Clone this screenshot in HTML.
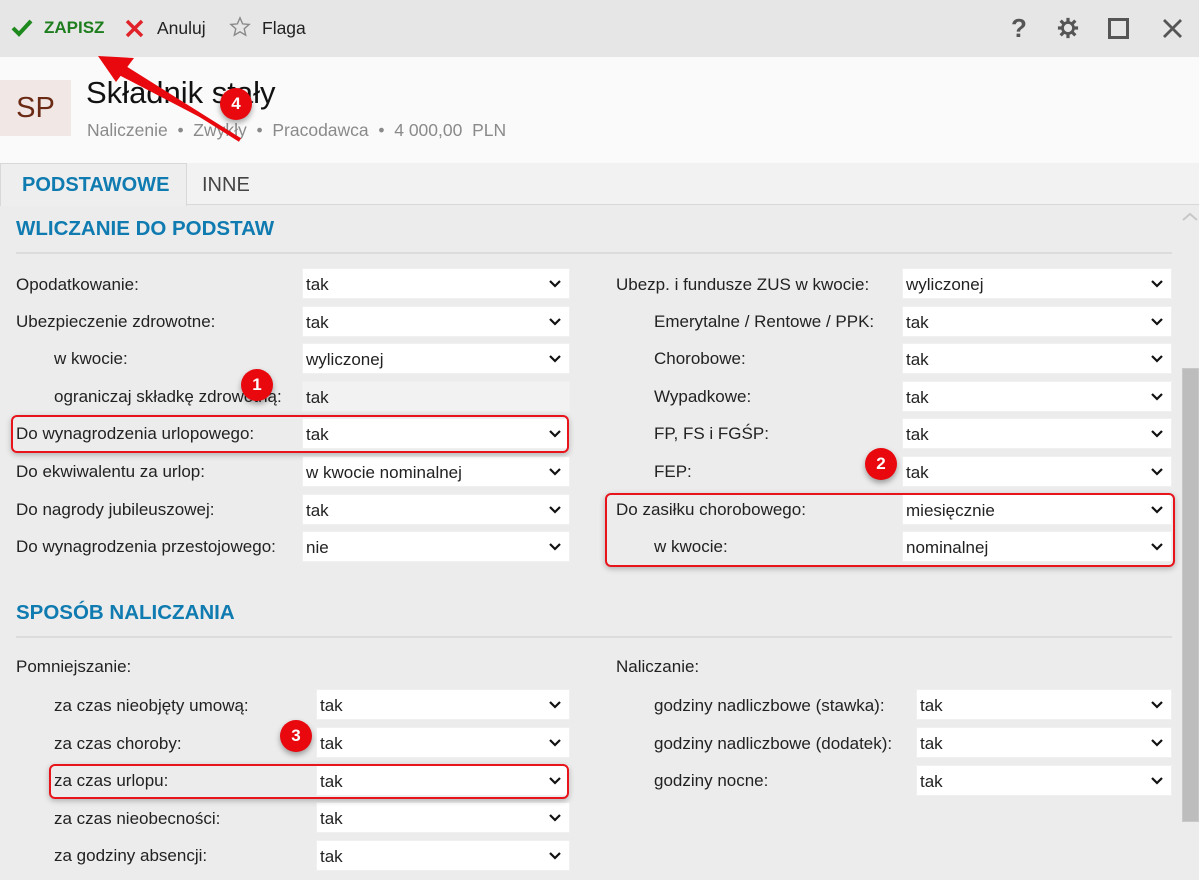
<!DOCTYPE html>
<html><head><meta charset="utf-8"><style>
*{margin:0;padding:0;box-sizing:border-box}
body{width:1199px;height:880px;overflow:hidden;background:#ececec;font-family:"Liberation Sans",sans-serif;font-size:17px;color:#222;position:relative}
.a{position:absolute;white-space:nowrap}
.tb{left:0;top:0;width:1199px;height:57px;background:#e6e6e6}
.hd{left:0;top:57px;width:1199px;height:106px;background:#fafafa}
.tabs{left:0;top:163px;width:1199px;height:42px;background:#f2f2f2;border-bottom:1px solid #d8d8d8}
.lbl{line-height:20px}
.sel{position:absolute;height:31px;background:#fff;border:1px solid #f0f0f0;line-height:31px;padding-left:3px}
.sel svg{position:absolute;right:8px;top:11px}
.ro{background:#f2f2f2}
.h{color:#0f7bb0;font-weight:bold;font-size:20.5px}
.line{height:2px;background:#dcdcdc}
.red{position:absolute;border:2px solid #e8141c;border-radius:6px;box-shadow:0 2px 6px rgba(0,0,0,.25)}
.c{position:absolute;width:32px;height:32px;border-radius:50%;background:#e8080e;color:#fff;font-weight:bold;font-size:17px;text-align:center;line-height:32px;box-shadow:0 3px 6px rgba(0,0,0,.35)}
</style></head><body>
<div class="a tb"></div>
<svg class="a" style="left:11px;top:19px" width="22" height="18" viewBox="0 0 22 18"><path d="M2 9 L8 15 L20 2" stroke="#1e8a1e" stroke-width="4" fill="none"/></svg>
<div class="a" style="left:44px;top:18px;color:#1e7d1e;font-weight:bold;font-size:17px">ZAPISZ</div>
<svg class="a" style="left:125px;top:19px" width="19" height="19"><path d="M2 2L17 17M17 2L2 17" stroke="#e0232a" stroke-width="3.5"/></svg>
<div class="a" style="left:157px;top:18px;font-size:17.5px">Anuluj</div>
<svg class="a" style="left:229px;top:16px" width="22" height="22" viewBox="0 0 24 24"><path d="M12 2l2.9 6.6 7.1.6-5.4 4.7 1.6 7-6.2-3.7-6.2 3.7 1.6-7L2 9.2l7.1-.6z" fill="none" stroke="#888" stroke-width="1.5"/></svg>
<div class="a" style="left:262px;top:18px;font-size:17.5px">Flaga</div>
<div class="a" style="left:1011px;top:13px;font-size:26px;color:#555;font-weight:bold">?</div>
<svg class="a" style="left:1057px;top:17px" width="22" height="22" viewBox="0 0 24 24"><circle cx="12" cy="12" r="6" fill="none" stroke="#555" stroke-width="3"/><g stroke="#555" stroke-width="3.5"><path d="M12 1v5M12 18v5M1 12h5M18 12h5M4 4l3.5 3.5M16.5 16.5L20 20M20 4l-3.5 3.5M7.5 16.5L4 20"/></g></svg>
<div class="a" style="left:1108px;top:18px;width:21px;height:21px;border:3px solid #555"></div>
<svg class="a" style="left:1162px;top:18px" width="21" height="21"><path d="M2 2L19 19M19 2L2 19" stroke="#555" stroke-width="2.8"/></svg>

<div class="a hd"></div>
<div class="a" style="left:0;top:80px;width:71px;height:56px;background:#f1e7e5;color:#6b2a14;font-size:29px;line-height:56px;text-align:center">SP</div>
<div class="a" style="left:86px;top:75px;font-size:31px;color:#111">Składnik stały</div>
<div class="a" style="left:87px;top:120px;font-size:17.5px;color:#8a8a8a">Naliczenie &nbsp;•&nbsp; Zwykły &nbsp;•&nbsp; Pracodawca &nbsp;•&nbsp; 4 000,00 &nbsp;PLN</div>

<div class="a tabs"></div>
<div class="a" style="left:0;top:163px;width:187px;height:43px;background:#eeeeee;border:1px solid #d8d8d8;border-bottom:none"></div>
<div class="a" style="left:22px;top:174px;font-size:20px;font-weight:bold;color:#0f7bb0">PODSTAWOWE</div>
<div class="a" style="left:202px;top:174px;font-size:20px;color:#444">INNE</div>

<svg class="a" style="left:1182px;top:212px" width="16" height="10"><path d="M1 8L8 2L15 8" stroke="#c8c8c8" stroke-width="2" fill="none"/></svg>
<div class="a" style="left:1182px;top:368px;width:17px;height:454px;background:#bdbdbd;border:1px solid #c8c8c8"></div>

<div class="a h" style="left:16px;top:217px">WLICZANIE DO PODSTAW</div>
<div class="a line" style="left:16px;top:252px;width:1156px"></div>

<div class="a lbl" style="left:16px;top:275px">Opodatkowanie:</div>
<div class="a lbl" style="left:16px;top:312px">Ubezpieczenie zdrowotne:</div>
<div class="a lbl" style="left:54px;top:349px">w kwocie:</div>
<div class="a lbl" style="left:54px;top:387px">ograniczaj składkę zdrowotną:</div>
<div class="a lbl" style="left:16px;top:424px">Do wynagrodzenia urlopowego:</div>
<div class="a lbl" style="left:16px;top:462px">Do ekwiwalentu za urlop:</div>
<div class="a lbl" style="left:16px;top:500px">Do nagrody jubileuszowej:</div>
<div class="a lbl" style="left:16px;top:537px">Do wynagrodzenia przestojowego:</div>

<div class="sel" style="left:302px;top:268px;width:268px">tak<svg width="12" height="8"><path d="M1 1l5 5 5-5" stroke="#111" stroke-width="2.2" fill="none"/></svg></div>
<div class="sel" style="left:302px;top:306px;width:268px">tak<svg width="12" height="8"><path d="M1 1l5 5 5-5" stroke="#111" stroke-width="2.2" fill="none"/></svg></div>
<div class="sel" style="left:302px;top:343px;width:268px">wyliczonej<svg width="12" height="8"><path d="M1 1l5 5 5-5" stroke="#111" stroke-width="2.2" fill="none"/></svg></div>
<div class="sel ro" style="left:302px;top:381px;width:268px">tak</div>
<div class="sel" style="left:302px;top:418px;width:268px">tak<svg width="12" height="8"><path d="M1 1l5 5 5-5" stroke="#111" stroke-width="2.2" fill="none"/></svg></div>
<div class="sel" style="left:302px;top:456px;width:268px">w kwocie nominalnej<svg width="12" height="8"><path d="M1 1l5 5 5-5" stroke="#111" stroke-width="2.2" fill="none"/></svg></div>
<div class="sel" style="left:302px;top:494px;width:268px">tak<svg width="12" height="8"><path d="M1 1l5 5 5-5" stroke="#111" stroke-width="2.2" fill="none"/></svg></div>
<div class="sel" style="left:302px;top:531px;width:268px">nie<svg width="12" height="8"><path d="M1 1l5 5 5-5" stroke="#111" stroke-width="2.2" fill="none"/></svg></div>

<div class="a lbl" style="left:616px;top:275px">Ubezp. i fundusze ZUS w kwocie:</div>
<div class="a lbl" style="left:654px;top:312px">Emerytalne / Rentowe / PPK:</div>
<div class="a lbl" style="left:654px;top:349px">Chorobowe:</div>
<div class="a lbl" style="left:654px;top:387px">Wypadkowe:</div>
<div class="a lbl" style="left:654px;top:424px">FP, FS i FGŚP:</div>
<div class="a lbl" style="left:654px;top:462px">FEP:</div>
<div class="a lbl" style="left:616px;top:500px">Do zasiłku chorobowego:</div>
<div class="a lbl" style="left:654px;top:537px">w kwocie:</div>

<div class="sel" style="left:902px;top:268px;width:270px">wyliczonej<svg width="12" height="8"><path d="M1 1l5 5 5-5" stroke="#111" stroke-width="2.2" fill="none"/></svg></div>
<div class="sel" style="left:902px;top:306px;width:270px">tak<svg width="12" height="8"><path d="M1 1l5 5 5-5" stroke="#111" stroke-width="2.2" fill="none"/></svg></div>
<div class="sel" style="left:902px;top:343px;width:270px">tak<svg width="12" height="8"><path d="M1 1l5 5 5-5" stroke="#111" stroke-width="2.2" fill="none"/></svg></div>
<div class="sel" style="left:902px;top:381px;width:270px">tak<svg width="12" height="8"><path d="M1 1l5 5 5-5" stroke="#111" stroke-width="2.2" fill="none"/></svg></div>
<div class="sel" style="left:902px;top:418px;width:270px">tak<svg width="12" height="8"><path d="M1 1l5 5 5-5" stroke="#111" stroke-width="2.2" fill="none"/></svg></div>
<div class="sel" style="left:902px;top:456px;width:270px">tak<svg width="12" height="8"><path d="M1 1l5 5 5-5" stroke="#111" stroke-width="2.2" fill="none"/></svg></div>
<div class="sel" style="left:902px;top:494px;width:270px">miesięcznie<svg width="12" height="8"><path d="M1 1l5 5 5-5" stroke="#111" stroke-width="2.2" fill="none"/></svg></div>
<div class="sel" style="left:902px;top:531px;width:270px">nominalnej<svg width="12" height="8"><path d="M1 1l5 5 5-5" stroke="#111" stroke-width="2.2" fill="none"/></svg></div>

<div class="a h" style="left:16px;top:601px">SPOSÓB NALICZANIA</div>
<div class="a line" style="left:16px;top:636px;width:1156px"></div>

<div class="a lbl" style="left:16px;top:657px">Pomniejszanie:</div>
<div class="a lbl" style="left:54px;top:696px">za czas nieobjęty umową:</div>
<div class="a lbl" style="left:54px;top:734px">za czas choroby:</div>
<div class="a lbl" style="left:54px;top:771px">za czas urlopu:</div>
<div class="a lbl" style="left:54px;top:809px">za czas nieobecności:</div>
<div class="a lbl" style="left:54px;top:846px">za godziny absencji:</div>

<div class="sel" style="left:316px;top:689px;width:254px">tak<svg width="12" height="8"><path d="M1 1l5 5 5-5" stroke="#111" stroke-width="2.2" fill="none"/></svg></div>
<div class="sel" style="left:316px;top:727px;width:254px">tak<svg width="12" height="8"><path d="M1 1l5 5 5-5" stroke="#111" stroke-width="2.2" fill="none"/></svg></div>
<div class="sel" style="left:316px;top:765px;width:254px">tak<svg width="12" height="8"><path d="M1 1l5 5 5-5" stroke="#111" stroke-width="2.2" fill="none"/></svg></div>
<div class="sel" style="left:316px;top:802px;width:254px">tak<svg width="12" height="8"><path d="M1 1l5 5 5-5" stroke="#111" stroke-width="2.2" fill="none"/></svg></div>
<div class="sel" style="left:316px;top:840px;width:254px">tak<svg width="12" height="8"><path d="M1 1l5 5 5-5" stroke="#111" stroke-width="2.2" fill="none"/></svg></div>

<div class="a lbl" style="left:616px;top:657px">Naliczanie:</div>
<div class="a lbl" style="left:654px;top:696px">godziny nadliczbowe (stawka):</div>
<div class="a lbl" style="left:654px;top:734px">godziny nadliczbowe (dodatek):</div>
<div class="a lbl" style="left:654px;top:771px">godziny nocne:</div>

<div class="sel" style="left:916px;top:689px;width:256px">tak<svg width="12" height="8"><path d="M1 1l5 5 5-5" stroke="#111" stroke-width="2.2" fill="none"/></svg></div>
<div class="sel" style="left:916px;top:727px;width:256px">tak<svg width="12" height="8"><path d="M1 1l5 5 5-5" stroke="#111" stroke-width="2.2" fill="none"/></svg></div>
<div class="sel" style="left:916px;top:765px;width:256px">tak<svg width="12" height="8"><path d="M1 1l5 5 5-5" stroke="#111" stroke-width="2.2" fill="none"/></svg></div>

<div class="red" style="left:11px;top:415px;width:558px;height:38px"></div>
<div class="red" style="left:605px;top:493px;width:570px;height:74px"></div>
<div class="red" style="left:49px;top:764px;width:520px;height:35px"></div>

<svg class="a" style="left:0;top:0" width="300" height="160"><path d="M236 136 L124 68 L119 75 Z" fill="#e8080e"/><path d="M240 140 L122 66" stroke="#e8080e" stroke-width="4"/><path d="M98 56 L134 58 L116 82 Z" fill="#e8080e"/></svg>

<div class="c" style="left:241px;top:369px">1</div>
<div class="c" style="left:865px;top:448px">2</div>
<div class="c" style="left:280px;top:720px">3</div>
<div class="c" style="left:220px;top:88px">4</div>
</body></html>
